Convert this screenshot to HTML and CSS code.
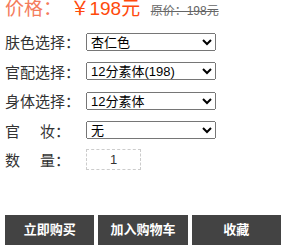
FILE: index.html
```html
<!DOCTYPE html>
<html lang="zh-CN">
<head>
    <meta charset="UTF-8">
    <meta name="viewport" content="width=device-width, initial-scale=1.0">
    <title>商品详情</title>
    <link rel="stylesheet" href="styles.css">
</head>
<body>
    <div class="price-row">
        <span class="price-label">价格：</span>
        <span class="price-now">￥198元</span>
        <span class="price-old">原价：198元</span>
    </div>

    <div class="options">
        <div class="opt-row">
            <label class="opt-label">肤色选择：</label>
            <select class="opt-select">
                <option>杏仁色</option>
            </select>
        </div>
        <div class="opt-row">
            <label class="opt-label">官配选择：</label>
            <select class="opt-select">
                <option>12分素体(198)</option>
            </select>
        </div>
        <div class="opt-row">
            <label class="opt-label">身体选择：</label>
            <select class="opt-select">
                <option>12分素体</option>
            </select>
        </div>
        <div class="opt-row">
            <label class="opt-label"><span class="wide">官</span>妆：</label>
            <select class="opt-select">
                <option>无</option>
            </select>
        </div>
        <div class="opt-row">
            <label class="opt-label"><span class="wide">数</span>量：</label>
            <input class="qty" type="text" value="1">
        </div>
    </div>

    <div class="actions">
        <div class="btn">立即购买</div>
        <div class="btn">加入购物车</div>
        <div class="btn">收藏</div>
    </div>
</body>
</html>
```

FILE: styles.css
```css
body {
    margin: 0;
    padding: 0 5px;
    font-family: "Liberation Sans", "Noto Sans CJK SC", sans-serif;
    color: #333;
    background-color: #fff;
}
.price-row {
    margin-top: -4px;
    height: 26px;
    line-height: 26px;
    white-space: nowrap;
}
.price-label {
    font-size: 19px;
    color: #f47c5c;
}
.price-now {
    font-size: 19px;
    color: #ff4a0c;
    margin-left: 4px;
}
.price-old {
    font-size: 12px;
    color: #666;
    text-decoration: line-through;
    margin-left: 6px;
}
.options {
    margin-top: 5px;
}
.opt-row {
    display: flex;
    align-items: center;
    height: 29.5px;
}
.opt-label {
    width: 81px;
    font-size: 15px;
    color: #333;
}
.opt-label .wide {
    display: inline-block;
    width: 35px;
}
.opt-select {
    width: 130px;
    height: 18px;
    font-size: 13px;
    font-family: "Liberation Sans", "Noto Sans CJK SC", sans-serif;
    color: #000;
    padding: 0;
}
.qty {
    width: 55px;
    height: 21px;
    box-sizing: border-box;
    border: 1px dashed #ccc;
    text-align: center;
    font-size: 13px;
    color: #333;
    font-family: "Liberation Sans", sans-serif;
    padding: 0;
    outline: none;
}
.actions {
    display: flex;
    gap: 4px;
    margin-top: 40px;
}
.btn {
    width: 90px;
    height: 30px;
    line-height: 30px;
    background-color: #434343;
    color: #fff;
    font-size: 13px;
    font-weight: bold;
    text-align: center;
}
```
